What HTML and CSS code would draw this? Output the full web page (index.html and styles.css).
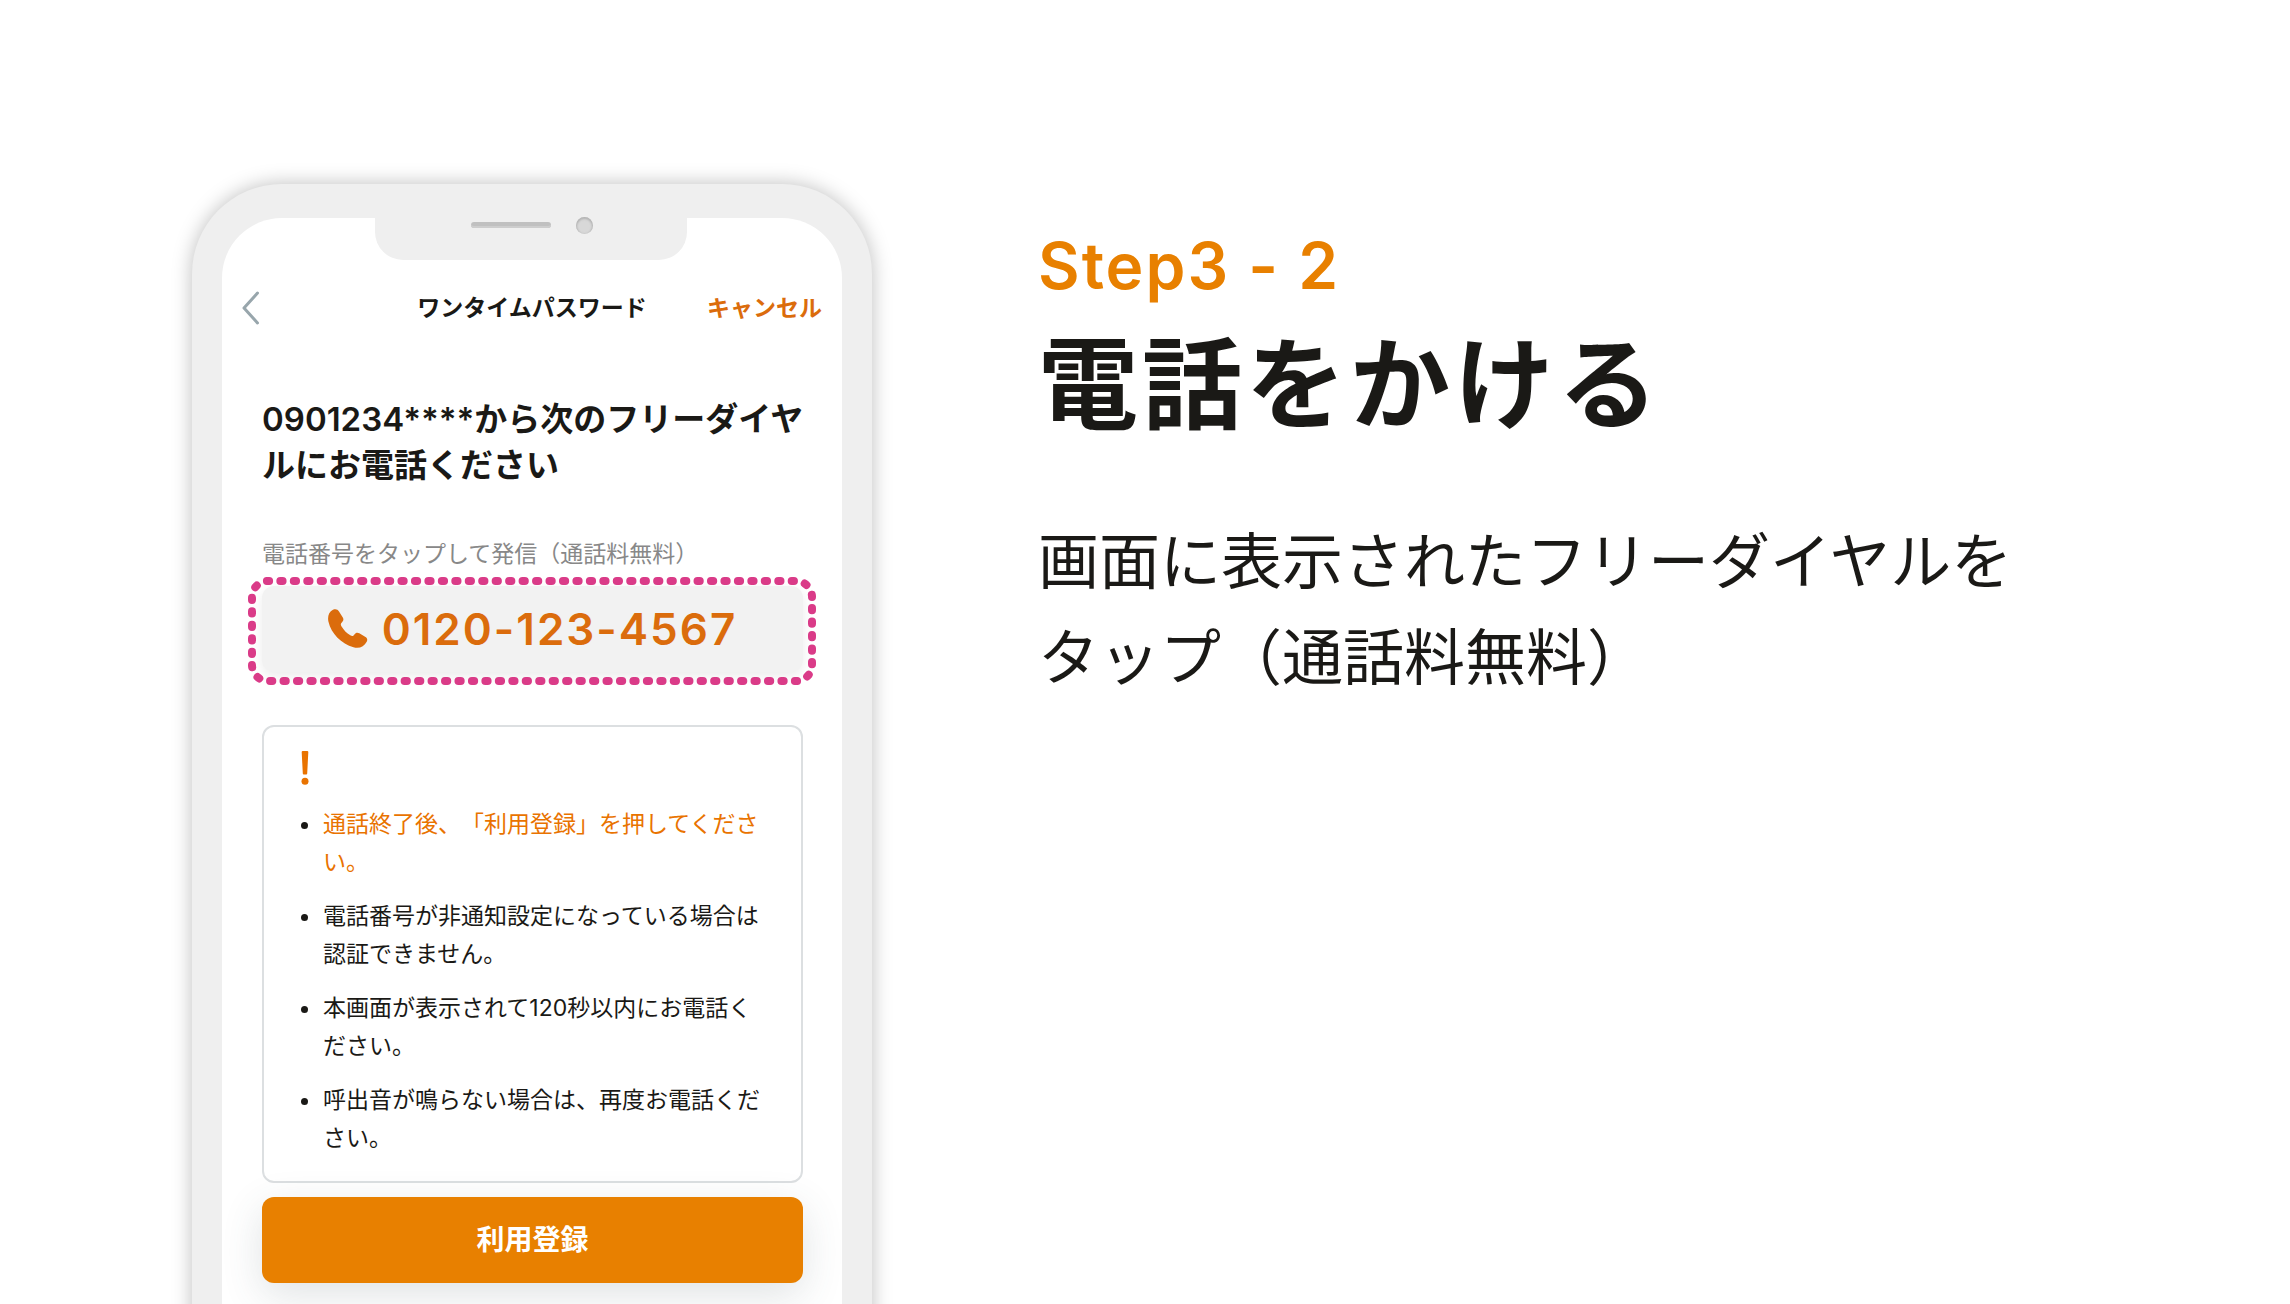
FILE: index.html
```html
<!DOCTYPE html>
<html lang="ja">

<head>
    <meta charset="utf-8">
    <title>電話をかける</title>
    <link rel="stylesheet" href="styles.css">
</head>

<body>
    <main class="guide">
        <div class="phone">
            <div class="notch">
                <span class="speaker"></span>
                <span class="camera"></span>
            </div>
            <div class="screen">
                <header class="nav">
                    <button type="button" class="back" aria-label="戻る">
                        <svg width="18" height="34" viewBox="0 0 18 34">
                            <path d="M15.5 2L2 17l13.500 15" />
                        </svg>
                    </button>
                    <h2 class="nav-title">ワンタイムパスワード</h2>
                    <button type="button" class="cancel">キャンセル</button>
                </header>

                <div class="content">
                    <p class="lead">0901234****から次のフリーダイヤルにお電話ください</p>
                    <p class="label">電話番号をタップして発信（通話料無料）</p>

                    <a class="tel" href="tel:0120-123-4567">
                        <svg class="tel-icon" width="40" height="40" viewBox="0 0 40 40">
                            <path d="M5 .8C7.600-.2 9.600.3 11 2.600l3.800 6c1 1.700.7 3.200-.6 4.500-1.500 1.500-1.800 2.500-.8 4.200 2.400 4 5.600 7.300 9.300 9.300 1.500.8 2.500.4 3.700-1.200 1.300-1.700 2.900-2.100 4.900-1.100l6.200 3.800c1.800 1.200 2.200 2.700 1.200 4.700-2.600 5-7.500 7.100-13.200 5.500C13.500 35 3.100 24.500.4 12.500-.6 7.600.8 2.700 5 .8z" />
                        </svg>
                        <span>0120-123-4567</span>
                        <!-- 枠の点線 -->
                        <svg class="dots" width="568" height="108" viewBox="0 0 568 108">
                            <rect x="4" y="4" width="560" height="100" rx="16" pathLength="1152" />
                        </svg>
                    </a>

                    <section class="notice">
                        <svg class="mark" width="8" height="34" viewBox="0 0 8 34">
                            <path d="M1.800 0h4.400Q7.400 0 7.300 1.300L6.200 22.500Q6.200 23.500 5.200 23.500H2.800Q1.800 23.500 1.800 22.500L.7 1.300Q.6 0 1.800 0z" />
                            <circle cx="4" cy="30.300" r="3.500" />
                        </svg>
                        <ul>
                            <li><em>通話終了後、「利用登録」を押してください。</em></li>
                            <li>電話番号が非通知設定になっている場合は認証できません。</li>
                            <li>本画面が表示されて120秒以内にお電話ください。</li>
                            <li>呼出音が鳴らない場合は、再度お電話ください。</li>
                        </ul>
                    </section>

                    <button type="button" class="submit">利用登録</button>
                </div>
            </div>
        </div>

        <div class="text">
            <p class="step">Step3 - 2</p>
            <h1>電話をかける</h1>
            <p class="desc">画面に表示されたフリーダイヤルを<br>タップ（通話料無料）</p>
        </div>
    </main>
</body>

</html>
```

FILE: styles.css
```css
* {
    box-sizing: border-box;
    margin: 0;
    padding: 0;
}
html, body {
    height: 100%;
}
body {
    overflow: hidden;
    background: #fff;
    color: #1a1916;
    font-family: Inter, "Noto Sans CJK JP", sans-serif;
    text-spacing-trim: space-all;
}
button {
    border: 0;
    background: none;
    font-family: inherit;
    cursor: pointer;
}
.guide {
    display: flex;
    gap: 166px;
    height: 100%;
    padding: 184px 64px 0 192px;
}

/* 端末 */
.phone {
    position: relative;
    flex: none;
    width: 680px;
    margin-bottom: -40px;
    padding: 34px 30px 0;
    border-radius: 90px 90px 0 0;
    background: #efefef;
    box-shadow: 0 0 20px rgba(0, 0, 0, 0.26);
}
.notch {
    position: absolute;
    top: 34px;
    left: 50%;
    width: 312px;
    height: 42px;
    margin-left: -157px;
    border-radius: 0 0 28px 28px;
    background: #efefef;
}
.speaker {
    position: absolute;
    top: 4px;
    left: 96px;
    width: 80px;
    height: 6px;
    border-radius: 3px;
    background: #c0c0c0;
    box-shadow: inset 0 -2px 0 #cdcdcd;
}
.camera {
    position: absolute;
    top: -1px;
    left: 201px;
    width: 17px;
    height: 17px;
    border-radius: 50%;
    background: #d8d8d8;
    box-shadow: inset 0 1px 2px 1px #b4b4b4;
}
.screen {
    height: 100%;
    padding-top: 66px;
    border-radius: 60px 60px 0 0;
    background: #fff;
    overflow: hidden;
}
.nav {
    display: grid;
    grid-template-columns: 1fr auto 1fr;
    align-items: center;
    height: 48px;
    padding: 0 20px;
}
.back {
    justify-self: start;
    height: 34px;
}
.back svg {
    display: block;
    fill: none;
    stroke: #98a6ac;
    stroke-width: 3;
    stroke-linecap: round;
    stroke-linejoin: round;
}
.nav-title,
.cancel {
    padding-bottom: 4px;
    font-size: 23px;
    font-weight: 700;
}
.cancel {
    justify-self: end;
    color: #db6c0c;
}
.content {
    padding: 64px 39px 0 40px;
}
.lead {
    margin-right: -10px;
    font-size: 33px;
    font-weight: 600;
    line-height: 46px;
}
.label {
    margin-top: 48px;
    color: #888;
    font-size: 23px;
    line-height: 36px;
}
.tel {
    position: relative;
    display: flex;
    align-items: center;
    justify-content: center;
    gap: 14px;
    height: 86px;
    margin-top: 14px;
    border-radius: 12px;
    background: #f2f2f2;
    box-shadow: 0 4px 12px rgba(0, 0, 0, 0.08);
    color: #db6c0c;
    font-size: 44px;
    font-weight: 600;
    letter-spacing: 2px;
    text-decoration: none;
}
.tel-icon {
    fill: #db6c0c;
}
.dots {
    position: absolute;
    top: -9px;
    left: -14px;
    fill: none;
    stroke: #da3b88;
    stroke-width: 8;
    stroke-linecap: round;
    stroke-dasharray: 2 10;
    stroke-dashoffset: 1;
}
.notice {
    margin-top: 53px;
    padding: 24px 34px 24px 37px;
    border: 2px solid #dcdfe1;
    border-radius: 12px;
}
.mark {
    display: block;
    fill: #e97300;
}
.notice ul {
    margin-top: 20px;
    padding-left: 22px;
    list-style: none;
}
.notice li {
    position: relative;
    font-size: 23px;
    line-height: 38px;
}
.notice li + li {
    margin-top: 16px;
}
.notice li::before {
    content: "";
    position: absolute;
    top: 17px;
    left: -22px;
    width: 7px;
    height: 7px;
    border-radius: 50%;
    background: #1a1916;
}
.notice em {
    color: #e97300;
    font-style: normal;
}
.submit {
    width: 100%;
    height: 86px;
    margin-top: 14px;
    padding-bottom: 4px;
    border-radius: 12px;
    background: #e88000;
    box-shadow: 0 12px 40px rgba(60, 80, 90, 0.16);
    color: #fff;
    font-size: 28px;
    font-weight: 700;
}

/* 説明文 */
.text {
    flex: 1;
    padding-top: 40px;
}
.step {
    color: #e88000;
    font-size: 64px;
    font-weight: 600;
    letter-spacing: 2px;
    line-height: 84px;
}
h1 {
    font-size: 100px;
    font-weight: 700;
    letter-spacing: 4px;
    line-height: 154px;
}
.desc {
    margin-top: 52px;
    font-size: 61px;
    line-height: 96px;
}
```
